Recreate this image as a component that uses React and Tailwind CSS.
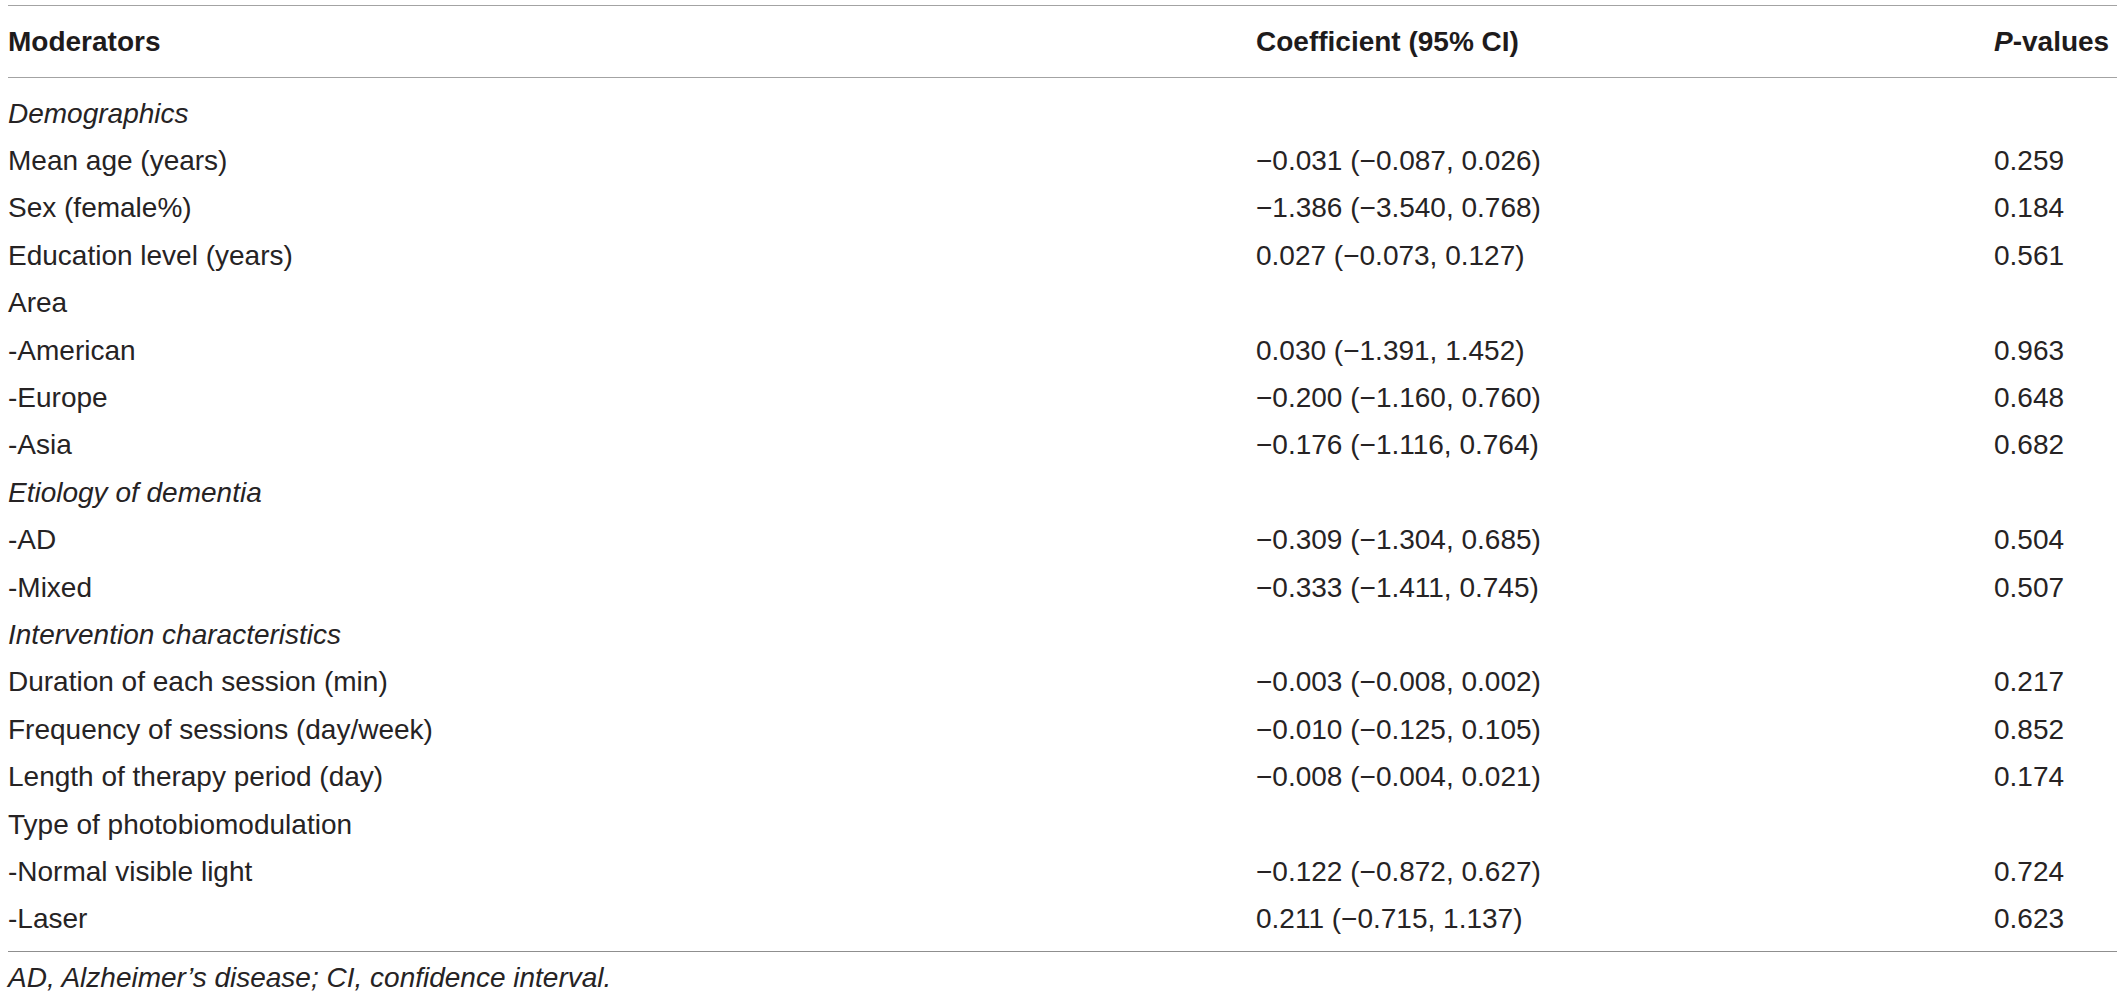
import React from "react";

const rows = [
  { label: "Demographics", italic: true },
  { label: "Mean age (years)", coef: "−0.031 (−0.087, 0.026)", p: "0.259" },
  { label: "Sex (female%)", coef: "−1.386 (−3.540, 0.768)", p: "0.184" },
  { label: "Education level (years)", coef: "0.027 (−0.073, 0.127)", p: "0.561" },
  { label: "Area" },
  { label: "-American", coef: "0.030 (−1.391, 1.452)", p: "0.963" },
  { label: "-Europe", coef: "−0.200 (−1.160, 0.760)", p: "0.648" },
  { label: "-Asia", coef: "−0.176 (−1.116, 0.764)", p: "0.682" },
  { label: "Etiology of dementia", italic: true },
  { label: "-AD", coef: "−0.309 (−1.304, 0.685)", p: "0.504" },
  { label: "-Mixed", coef: "−0.333 (−1.411, 0.745)", p: "0.507" },
  { label: "Intervention characteristics", italic: true },
  { label: "Duration of each session (min)", coef: "−0.003 (−0.008, 0.002)", p: "0.217" },
  { label: "Frequency of sessions (day/week)", coef: "−0.010 (−0.125, 0.105)", p: "0.852" },
  { label: "Length of therapy period (day)", coef: "−0.008 (−0.004, 0.021)", p: "0.174" },
  { label: "Type of photobiomodulation" },
  { label: "-Normal visible light", coef: "−0.122 (−0.872, 0.627)", p: "0.724" },
  { label: "-Laser", coef: "0.211 (−0.715, 1.137)", p: "0.623" },
];

export default function App() {
  return (
    <div
      className="w-[2120px] h-[999px] bg-white text-[#262324] overflow-hidden"
      style={{ fontFamily: '"Liberation Sans", Arial, sans-serif' }}
    >
      <div className="ml-[8px] mr-[3px] pt-[5px]">
        <div className="border-t border-[#a3a3a3]" />
        <div className="grid grid-cols-[1248px_738px_1fr] h-[71px] items-center text-[28px] font-bold leading-none text-[#1e1b1c]">
          <div>Moderators</div>
          <div>Coefficient (95% CI)</div>
          <div>
            <span className="italic">P</span>-values
          </div>
        </div>
        <div className="border-t border-[#a3a3a3]" />
        <div className="pt-[12px] pb-[8px]">
          {rows.map((r, i) => (
            <div
              key={i}
              className="grid grid-cols-[1248px_738px_1fr] h-[47.4px] items-center text-[28px] leading-none"
            >
              <div className={r.italic ? "italic" : ""}>{r.label}</div>
              <div>{r.coef || ""}</div>
              <div>{r.p || ""}</div>
            </div>
          ))}
        </div>
        <div className="border-t border-[#8f8f8f]" />
        <div className="pt-[12px] text-[28px] italic leading-none">
          AD, Alzheimer’s disease; CI, confidence interval.
        </div>
      </div>
    </div>
  );
}
